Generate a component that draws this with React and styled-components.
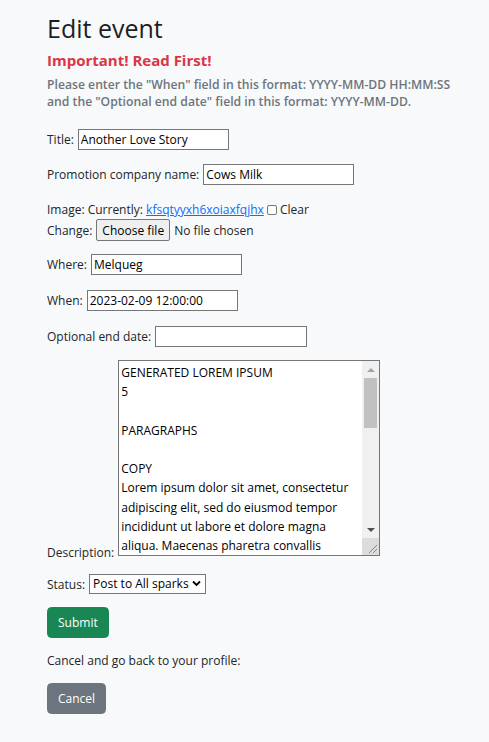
import React from 'react'
import styled, { createGlobalStyle } from 'styled-components'

const GlobalStyle = createGlobalStyle`
  html, body {
    margin: 0;
    background: #f8f9fa;
  }
  body {
    font-family: "Open Sans", "Noto Sans", sans-serif;
    font-size: 12px;
    line-height: 19.2px;
    color: #212529;
  }
  * {
    box-sizing: border-box;
  }
`

const Page = styled.div`
  padding: 13px 20px 30px 47px;
`

const Heading = styled.h2`
  margin: 0;
  font-size: 25px;
  font-weight: 500;
  line-height: 30px;
  color: #1b1f23;
`

const Warning = styled.h5`
  margin: 8px 0 0;
  font-size: 15px;
  font-weight: 700;
  line-height: 19px;
  color: #dc3545;
`

const Note = styled.h6`
  margin: 6px 0 0;
  font-size: 12.2px;
  font-weight: 600;
  line-height: 17px;
  color: #6c757d;
`

const Form = styled.form`
  display: flex;
  flex-direction: column;
  align-items: flex-start;
  margin-top: 19px;
`

const Field = styled.div`
  display: flex;
  align-items: ${p => (p.$bottom ? 'flex-end' : 'center')};
  gap: 4px;
  margin-bottom: ${p => p.$space ?? 14}px;
`

const Label = styled.label`
  white-space: nowrap;
`

const BottomLabel = styled(Label)`
  margin-bottom: -6px;
`

const TextInput = styled.input`
  width: ${p => p.$w ?? 151}px;
  height: 21px;
  padding: 0 2px;
  border: 1px solid #767676;
  background: #fff;
  font: inherit;
  color: #000;
  outline: none;
`

const Link = styled.a`
  color: #0d6efd;
  text-decoration: underline;
`

const Check = styled.input`
  appearance: none;
  width: 10px;
  height: 10px;
  margin: 0 0 0 3px;
  border: 1px solid #767676;
  border-radius: 2px;
  background: #fff;
  vertical-align: -1px;
`

const ImageBlock = styled.div`
  margin-bottom: 13px;
`

const HiddenFile = styled.input`
  display: none;
`

const FileButton = styled.label`
  display: inline-flex;
  align-items: center;
  height: 22px;
  padding: 0 5px;
  border: 1px solid #767676;
  border-radius: 2px;
  background: #efefef;
  color: #000;
`

const FileName = styled.span`
  color: #212529;
`

const AreaWrap = styled.span`
  position: relative;
  display: inline-flex;
`

const TextArea = styled.textarea`
  width: 262px;
  height: 196px;
  padding: 2px 19px 2px 2px;
  border: 1px solid #767676;
  background: #fff;
  font: inherit;
  color: #000;
  outline: none;
  overflow: hidden;
  resize: none;
`

const ScrollBar = styled.div`
  position: absolute;
  top: 1px;
  right: 1px;
  bottom: 1px;
  width: 17px;
  display: flex;
  flex-direction: column;
  background: #f0f0f0;
`

const ScrollButton = styled.div`
  height: 17px;
  display: flex;
  align-items: center;
  justify-content: center;
`

const Track = styled.div`
  flex: 1;
  padding: 0 2px;
`

const Thumb = styled.div`
  height: 50px;
  background: #c1c1c1;
`

const Corner = styled.div`
  height: 17px;
  background: #dcdcdc;
  display: flex;
  align-items: flex-end;
  justify-content: flex-end;
`

const SelectWrap = styled.span`
  position: relative;
  display: inline-flex;
`

const Select = styled.select`
  appearance: none;
  width: 117px;
  height: 20px;
  padding: 0 14px 0 3px;
  border: 1px solid #767676;
  border-radius: 0;
  background: #fff;
  font: inherit;
  line-height: 18px;
  color: #000;
`

const Chevron = styled.svg`
  position: absolute;
  right: 5px;
  top: 6px;
  pointer-events: none;
`

const Button = styled.button`
  height: 31px;
  padding: 0 10px;
  border: 1px solid ${p => p.$color};
  border-radius: 4.5px;
  background: ${p => p.$color};
  color: #fff;
  font: inherit;
  cursor: pointer;
`

const Text = styled.p`
  margin: 0 0 13px;
`

const description = `GENERATED LOREM IPSUM
5

PARAGRAPHS

COPY
Lorem ipsum dolor sit amet, consectetur adipiscing elit, sed do eiusmod tempor incididunt ut labore et dolore magna aliqua. Maecenas pharetra convallis posuere morbi leo urna molestie at. Amet consectetur adipiscing elit duis tristique sollicitudin nibh sit.

Sed turpis tincidunt id aliquet risus feugiat in ante metus. Nunc sed blandit libero volutpat sed cras ornare arcu. Mauris pharetra et ultrices neque ornare aenean euismod.

Ut tortor pretium viverra suspendisse potenti nullam ac tortor vitae. Diam vel quam elementum pulvinar etiam non quam lacus.`

export default function App() {
  return (
    <Page>
      <GlobalStyle />
      <Heading>Edit event</Heading>
      <Warning>Important! Read First!</Warning>
      <Note>
        Please enter the "When" field in this format: YYYY-MM-DD HH:MM:SS
        <br />
        and the "Optional end date" field in this format: YYYY-MM-DD.
      </Note>
      <Form onSubmit={e => e.preventDefault()}>
        <Field>
          <Label htmlFor="title">Title:</Label>
          <TextInput id="title" defaultValue="Another Love Story" />
        </Field>
        <Field $space={15}>
          <Label htmlFor="company">Promotion company name:</Label>
          <TextInput id="company" defaultValue="Cows Milk" />
        </Field>
        <ImageBlock>
          <div>
            Image: Currently: <Link href="#">kfsqtyyxh6xoiaxfqjhx</Link>
            <Check type="checkbox" id="clear" /> <label htmlFor="clear">Clear</label>
          </div>
          <Field $space={0}>
            <Label>Change:</Label>
            <FileButton htmlFor="image">Choose file</FileButton>
            <HiddenFile id="image" type="file" />
            <FileName>No file chosen</FileName>
          </Field>
        </ImageBlock>
        <Field $space={15}>
          <Label htmlFor="where">Where:</Label>
          <TextInput id="where" defaultValue="Melqueg" />
        </Field>
        <Field $space={15}>
          <Label htmlFor="when">When:</Label>
          <TextInput id="when" defaultValue="2023-02-09 12:00:00" />
        </Field>
        <Field $space={13}>
          <Label htmlFor="end">Optional end date:</Label>
          <TextInput id="end" $w={152} />
        </Field>
        <Field $bottom $space={18}>
          <BottomLabel htmlFor="desc">Description:</BottomLabel>
          <AreaWrap>
            <TextArea id="desc" defaultValue={description} />
            <ScrollBar>
              <ScrollButton>
                <svg width="8" height="4" viewBox="0 0 8 4"><polygon points="0,4 4,0 8,4" fill="#a3a3a3" /></svg>
              </ScrollButton>
              <Track><Thumb /></Track>
              <ScrollButton>
                <svg width="8" height="4" viewBox="0 0 8 4"><polygon points="0,0 8,0 4,4" fill="#505050" /></svg>
              </ScrollButton>
              <Corner>
                <svg width="14" height="14" viewBox="0 0 14 14">
                  <path d="M12 4 L4 12 M12 8 L8 12" stroke="#8a8a8a" strokeWidth="1" />
                </svg>
              </Corner>
            </ScrollBar>
          </AreaWrap>
        </Field>
        <Field $space={13}>
          <Label htmlFor="status">Status:</Label>
          <SelectWrap>
            <Select id="status" defaultValue="all">
              <option value="all">Post to All sparks</option>
              <option value="friends">Post to friends</option>
            </Select>
            <Chevron width="9" height="7" viewBox="0 0 9 7">
              <path d="M1 1.5 L4.5 5 L8 1.5" fill="none" stroke="#000" strokeWidth="1.8" />
            </Chevron>
          </SelectWrap>
        </Field>
        <Field $space={13}>
          <Button type="submit" $color="#198754">Submit</Button>
        </Field>
        <Text>Cancel and go back to your profile:</Text>
        <Button type="button" $color="#6c757d">Cancel</Button>
      </Form>
    </Page>
  )
}
